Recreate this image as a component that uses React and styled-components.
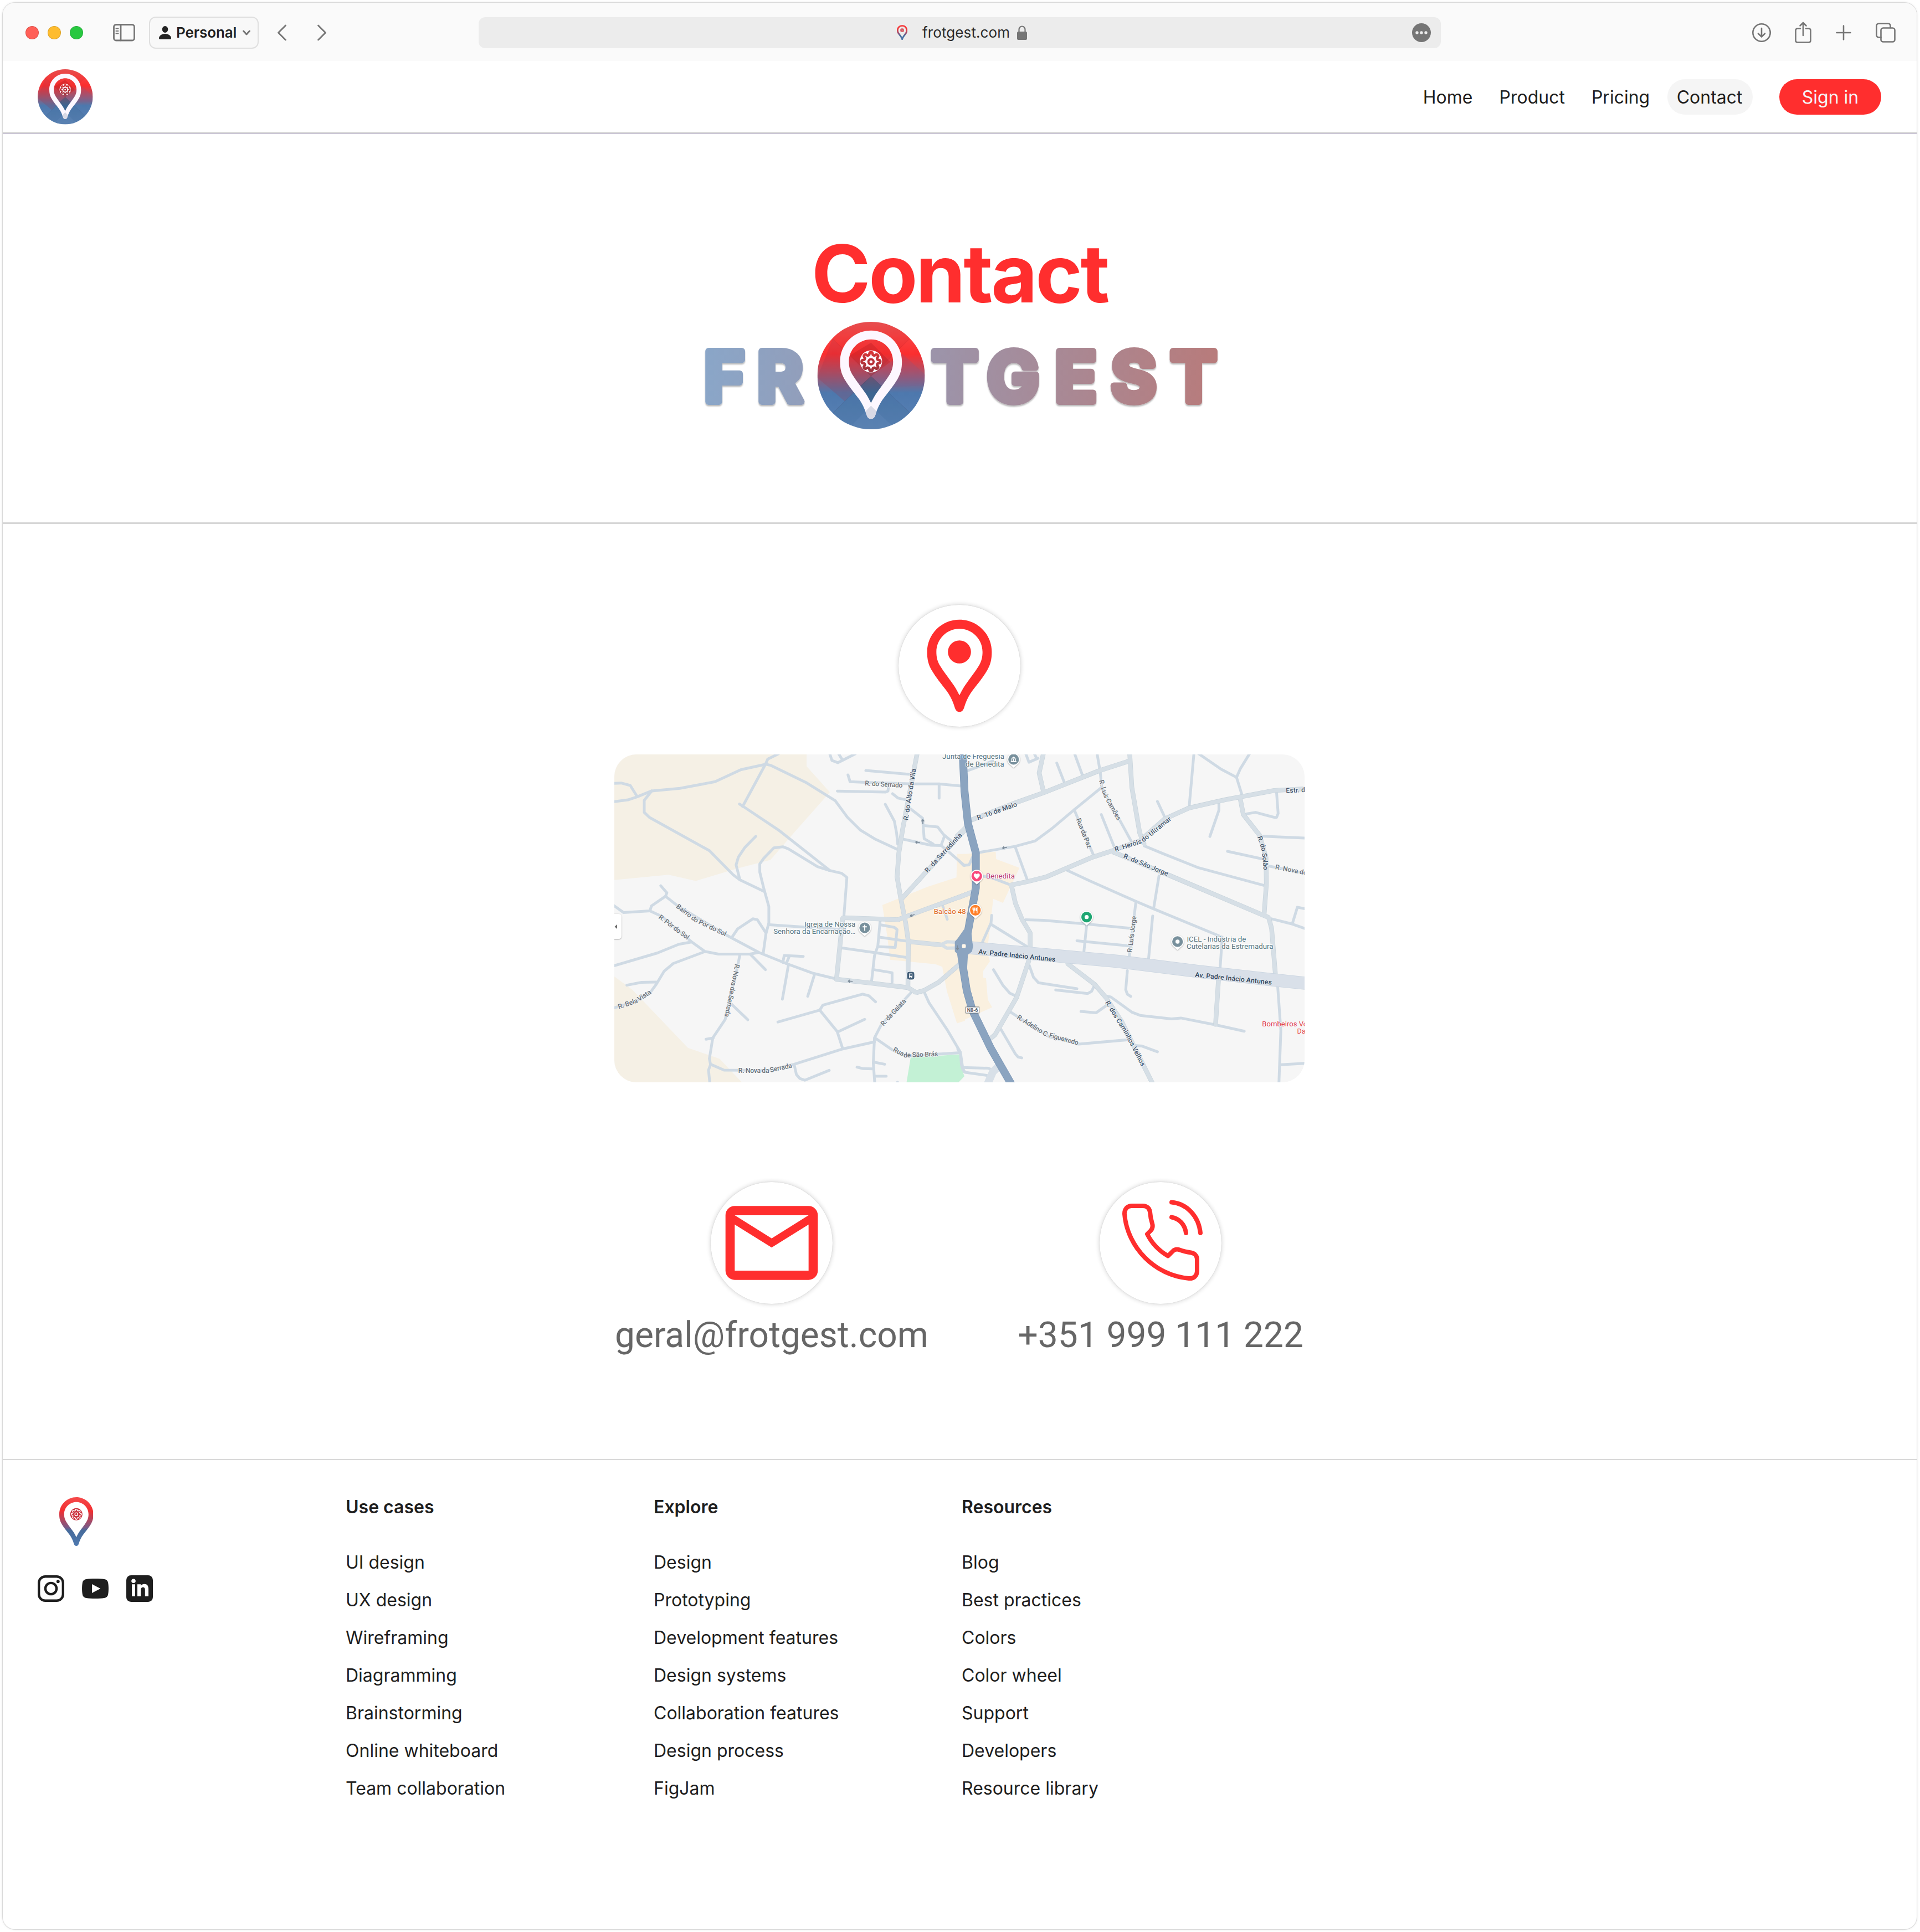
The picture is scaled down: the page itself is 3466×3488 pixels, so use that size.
import React from "react";
import styled, { createGlobalStyle } from "styled-components";

const Global = createGlobalStyle`
  * { box-sizing: border-box; }
  body { margin: 0; background: #fff; font-family: Inter, "Liberation Sans", sans-serif; color: #1e1e1e; }
  svg { display: block; flex: none; }
`;

/* ---------- window ---------- */
const Window = styled.div`
  margin: 5px;
  width: 3455px;
  height: 3478px;
  display: flex;
  flex-direction: column;
  background: #fff;
  border-radius: 22px;
  overflow: hidden;
  box-shadow: 0 0 1px 1px rgba(0, 0, 0, 0.12), 0 0 5px rgba(0, 0, 0, 0.1);
`;

const TitleBar = styled.div`
  height: 105px;
  flex: none;
  padding: 2px 38px 0 41px;
  display: grid;
  grid-template-columns: 818px 1737px 1fr;
  align-items: center;
  background: #fafafa;
`;
const BarGroup = styled.div`
  display: flex;
  align-items: center;
`;
const BarActions = styled(BarGroup)`
  justify-content: flex-end;
`;
const Light = styled.span`
  width: 24px;
  height: 24px;
  margin-right: 16px;
  border-radius: 50%;
  background: ${(p) => p.$color};
  border: 1px solid rgba(0, 0, 0, 0.14);
`;
const Profile = styled.div`
  display: flex;
  align-items: center;
  width: 198px;
  height: 58px;
  margin: 0 33px 0 25px;
  padding-left: 16px;
  border: 2px solid #dfdfdf;
  border-radius: 12px;
  background: #f8f8f8;
  font-size: 26px;
  font-weight: 600;
  color: #222;
`;
const ProfileName = styled.span`
  margin: 0 10px 0 9px;
  letter-spacing: -0.1px;
`;
const AddressBar = styled.div`
  height: 56px;
  display: grid;
  grid-template-columns: 1fr auto 1fr;
  align-items: center;
  padding: 0 18px;
  border-radius: 12px;
  background: #ececec;
  font-size: 26px;
  color: #2a2a2a;
`;
const Address = styled.div`
  grid-column: 2;
  display: flex;
  align-items: center;
  margin-left: 9px;
`;
const Host = styled.span`
  margin: 0 12px 0 27px;
  letter-spacing: 0.1px;
`;
const More = styled.div`
  justify-self: end;
`;

/* ---------- site header ---------- */
const Header = styled.header`
  height: 130px;
  flex: none;
  padding: 2px 64px 0 63px;
  display: flex;
  align-items: center;
  justify-content: space-between;
  border-bottom: 2px solid #d9d9d9;
`;
const Nav = styled.nav`
  display: flex;
  align-items: center;
  gap: 16px;
`;
const NavLink = styled.a`
  padding: ${(p) => (p.$active ? "17px 18.5px 15px 16.5px" : "17px 16px 15px")};
  border-radius: 32px;
  font-size: 32px;
  line-height: 32px;
  background: ${(p) => (p.$active ? "#f5f5f5" : "transparent")};
`;
const SignIn = styled.button`
  width: 184px;
  height: 64px;
  margin-left: 32px;
  padding: 1px 0 0;
  border: 0;
  border-radius: 32px;
  background: #ff2e2e;
  color: #f5f5f5;
  font: 400 32px/32px Inter, sans-serif;
`;

/* ---------- hero ---------- */
const Hero = styled.section`
  height: 706px;
  flex: none;
  padding-top: 165px;
  display: flex;
  flex-direction: column;
  align-items: center;
  border-top: 2px solid #cbc7d5;
  border-bottom: 3px solid #d6d6d6;
`;
const Title = styled.h1`
  margin: 0;
  font-size: 144px;
  line-height: 174px;
  font-weight: 700;
  letter-spacing: -0.024em;
  color: #ff2e2e;
`;

/* ---------- contact ---------- */
const ContactSection = styled.section`
  height: 1688px;
  flex: none;
  padding: 146px 2px 0 0;
  display: flex;
  flex-direction: column;
  align-items: center;
`;
const IconDisc = styled.div`
  width: 220px;
  height: 220px;
  display: flex;
  align-items: center;
  justify-content: center;
  border-radius: 50%;
  background: #fff;
  box-shadow: 0 0 1px rgba(0, 0, 0, 0.2), 0 0 8px rgba(0, 0, 0, 0.2);
`;
const MapCard = styled.div`
  width: 1246px;
  height: 592px;
  margin: 50px 0 180px;
  border-radius: 40px;
  overflow: hidden;
`;
const Channels = styled.div`
  width: 1243px;
  display: flex;
  justify-content: space-between;
`;
const Channel = styled.div`
  display: flex;
  flex-direction: column;
  align-items: center;
  gap: 18px;
  font: 400 64px/78px Roboto, sans-serif;
  color: #666;
`;

/* ---------- footer ---------- */
const Footer = styled.footer`
  flex: 1;
  padding: 63px 63px 64px;
  display: flex;
  border-top: 2px solid #d9d9d9;
`;
const Brand = styled.div`
  width: 556px;
  padding: 4px 0 0;
`;
const BrandMark = styled.div`
  padding-left: 38.5px;
`;
const Socials = styled.div`
  margin-top: 53px;
  display: flex;
  align-items: center;
  gap: 32px;
`;
const LinkColumn = styled.div`
  width: 556px;
  font-size: 32px;
  line-height: 44px;
`;
const ColumnTitle = styled.h2`
  margin: 0 0 56px;
  font-size: 32px;
  line-height: 44px;
  font-weight: 600;
`;
const LinkList = styled.ul`
  margin: 0;
  padding: 0;
  list-style: none;
  display: flex;
  flex-direction: column;
  gap: 24px;
`;

/* ---------- logo parts ---------- */
const PIN =
  "M12 2C8.13 2 5 5.13 5 9C5 10.6 5.25 11.7 6 13C6.9 14.55 8.1 15.95 9.2 17.4C9.95 18.4 10.6 19.7 11 21.1C11.2 21.7 11.5 22 12 22C12.5 22 12.8 21.7 13 21.1C13.4 19.7 14.05 18.4 14.8 17.4C15.9 15.95 17.1 14.55 18 13C18.75 11.7 19 10.6 19 9C19 5.13 15.87 2 12 2Z" +
  "M12 4C14.76 4 17 6.24 17 9C17 10.1 16.8 11 16.2 12C15.3 13.5 14.1 14.9 13.1 16.4C12.7 17 12.35 17.7 12 18.4C11.65 17.7 11.3 17 10.9 16.4C9.9 14.9 8.7 13.5 7.8 12C7.2 11 7 10.1 7 9C7 6.24 9.24 4 12 4Z";

const gearPath = (cx, cy, base, amp) => {
  const pts = [];
  for (let i = 0; i < 128; i++) {
    const a = (i / 128) * Math.PI * 2;
    const r = base + amp * Math.tanh(2 * Math.cos(8 * a));
    pts.push(`${(cx + r * Math.sin(a)).toFixed(3)} ${(cy - r * Math.cos(a)).toFixed(3)}`);
  }
  return `M${pts.join("L")}Z`;
};

const EmblemArt = ({ id }) => (
  <>
    <defs>
      <linearGradient id={`${id}-g`} x1="0" y1="33" x2="0" y2="614" gradientUnits="userSpaceOnUse">
        <stop offset="0" stopColor="#ee5252" />
        <stop offset="0.14" stopColor="#f94040" />
        <stop offset="0.3" stopColor="#fb2e2f" />
        <stop offset="0.48" stopColor="#a9536b" />
        <stop offset="0.66" stopColor="#4d78ad" />
        <stop offset="1" stopColor="#5a82b5" />
      </linearGradient>
      <linearGradient id={`${id}-r`} x1="0" y1="187" x2="0" y2="307" gradientUnits="userSpaceOnUse">
        <stop offset="0" stopColor="#dd3435" />
        <stop offset="1" stopColor="#98303b" />
      </linearGradient>
      <clipPath id={`${id}-c`}>
        <circle cx="336.5" cy="323.5" r="290.5" />
      </clipPath>
      <clipPath id={`${id}-t`}>
        <path d="M336 487L420 571H252Z" />
      </clipPath>
    </defs>
    <g clipPath={`url(#${id}-c)`}>
      <rect x="46" y="33" width="581" height="581" fill={`url(#${id}-g)`} />
      <path d="M336 -80L545 125L336 327L128 125Z" fill="#7c1520" opacity="0.06" />
      <path d="M336 146L440 250L336 327L222 215Z" fill="#8a1018" opacity="0.2" />
      <path d="M46 335L128 125L336 327L193 462Z" fill="#a03048" opacity="0.22" />
      <path d="M336 327L505 205L640 330V375L400 390Z" fill="#7a5a90" opacity="0.2" />
      <path d="M336 327L430 415L336 500L240 415Z" fill="#15304a" opacity="0.28" />
      <path d="M193 462L336 327L545 523L450 614H220L132 523Z" fill="#3d6790" opacity="0.2" />
      <path d="M336 487L470 614H210Z" fill="#6d8fc0" opacity="0.25" />
      <path d="M128 125L336 327L545 125M132 523L336 327L545 523" fill="none" stroke="#401020" strokeWidth="2" opacity="0.14" />
    </g>
    <g fillRule="evenodd">
      <path d={PIN} transform="translate(49.2 32.2) scale(23.9)" fill="#fdf7ff" />
      <g clipPath={`url(#${id}-t)`}>
        <path d={PIN} transform="translate(49.2 32.2) scale(23.9)" fill="#dadae6" />
      </g>
    </g>
    <circle cx="336" cy="247" r="60" fill="#fdf7ff" />
    <path d={gearPath(336, 248, 43.5, 7)} fill="none" stroke={`url(#${id}-r)`} strokeWidth="14" strokeLinejoin="round" />
    <circle cx="336" cy="249" r="14" fill="none" stroke="#b93038" strokeWidth="12" />
  </>
);

const Emblem = ({ size, id }) => (
  <svg width={size} height={size} viewBox="46 33 581 581">
    <EmblemArt id={id} />
  </svg>
);

const GradientPin = ({ height, id }) => (
  <svg width={height * 0.7} height={height} viewBox="5 2 14 20">
    <defs>
      <linearGradient id={id} x1="0" y1="2" x2="0" y2="22" gradientUnits="userSpaceOnUse">
        <stop offset="0" stopColor="#f54a4b" />
        <stop offset="0.28" stopColor="#f22f31" />
        <stop offset="0.62" stopColor="#7a5a86" />
        <stop offset="0.68" stopColor="#466b9b" />
        <stop offset="1" stopColor="#4f7ab0" />
      </linearGradient>
    </defs>
    <path d={PIN} fill={`url(#${id})`} fillRule="evenodd" />
    <circle cx="12" cy="9" r="2.5" fill="#cc3540" />
    <path d={gearPath(12, 9, 1.8, 0.3)} fill="none" stroke="#fff" strokeWidth="0.32" />
    <circle cx="12" cy="9" r="0.6" fill="none" stroke="#fff" strokeWidth="0.32" />
  </svg>
);

const Wordmark = () => (
  <svg width="946" height="194" viewBox="0 0 946 194" overflow="visible">
    <defs>
      <linearGradient id="word" x1="12" y1="0" x2="938" y2="0" gradientUnits="userSpaceOnUse">
        <stop offset="0" stopColor="#8aa6c8" />
        <stop offset="0.47" stopColor="#9d93a8" />
        <stop offset="1" stopColor="#b87b7b" />
      </linearGradient>
      <filter id="wordShadow" x="-5%" y="-20%" width="110%" height="150%">
        <feDropShadow dx="0" dy="2.5" stdDeviation="1.2" floodColor="#000" floodOpacity="0.28" />
      </filter>
    </defs>
    <g
      filter="url(#wordShadow)"
      fill="url(#word)"
      stroke="url(#word)"
      strokeWidth="12"
      strokeLinejoin="round"
      strokeLinecap="round"
      fontFamily="Inter, sans-serif"
      fontWeight="700"
      fontSize="125"
    >
      <text y="143.5" x="11 107">FR</text>
      <text y="143.5" x="422 522 644 745.5 853">TGEST</text>
    </g>
    <svg x="215.5" y="0" width="194" height="194" viewBox="46 33 581 581">
      <EmblemArt id="hero" />
    </svg>
  </svg>
);

/* ---------- icons ---------- */
const Line = styled.svg`
  fill: none;
  stroke: #757575;
  stroke-width: ${(p) => p.$w || 2.6};
  stroke-linecap: round;
  stroke-linejoin: round;
  margin-left: ${(p) => p.$ml || 0}px;
`;

const MailIcon = () => (
  <svg width="200" height="200" viewBox="0 0 24 24" fill="#ff2e2e">
    <path d="M22 6c0-1.1-.9-2-2-2H4c-1.1 0-2 .9-2 2v12c0 1.1.9 2 2 2h16c1.1 0 2-.9 2-2V6zm-2 0l-8 5-8-5h16zm0 12H4V8l8 5 8-5v10z" />
  </svg>
);
const PlaceIcon = () => (
  <svg width="200" height="200" viewBox="0 0 24 24" fill="#ff2e2e">
    <path d={PIN} fillRule="evenodd" />
    <circle cx="12" cy="9" r="2.5" />
  </svg>
);
const PhoneIcon = () => (
  <svg width="220" height="220" viewBox="0 0 220 220" fill="none" stroke="#ff2e2e" strokeWidth="8" strokeLinecap="round" strokeLinejoin="round">
    <path d="M58 43H78C85 43 90 47 91 54C91.6 62 93 69 95 75C96.5 80 95.500 84 92.500 87.500L86 94C94 110 107 124 123.500 133.500L132 125C135.500 121.500 140 120.800 144.500 122.500C151 125 158 126.500 165 127.500C172 128.800 176 133.500 176 140V160C176 169 170 175 161 174C100 169 50 118 45 58C44.500 49 50 43 58 43Z" />
    <path d="M130 36.500C158 39 179 62 182 92M130 63.500C144 66 154 77 156 92" />
  </svg>
);

const InstagramIcon = () => (
  <svg width="48" height="48" viewBox="0 0 48 48" fill="none" stroke="#1e1e1e" strokeWidth="4.400">
    <rect x="2.200" y="2.200" width="43.600" height="43.600" rx="11.500" />
    <circle cx="24" cy="24" r="10.100" />
    <circle cx="36.800" cy="11.200" r="2.900" fill="#1e1e1e" stroke="none" />
  </svg>
);
const YouTubeIcon = () => (
  <svg width="48" height="48" viewBox="0 0 48 48">
    <path fill="#1e1e1e" d="M8 7C15 5.700 33 5.700 40 7C44.500 7.700 46.600 10 47.200 14C48.200 20 48.200 28 47.200 34C46.600 38 44.500 40.300 40 41C33 42.300 15 42.300 8 41C3.500 40.300 1.400 38 .8 34C-.2 28-.2 20 .8 14C1.400 10 3.500 7.700 8 7Z" />
    <path fill="#fff" d="M18 16L33.300 24L18 32Z" />
  </svg>
);
const LinkedInIcon = () => (
  <svg width="48" height="48" viewBox="0 0 48 48">
    <rect width="48" height="48" rx="8.500" fill="#1e1e1e" />
    <g fill="#fff">
      <circle cx="13" cy="10.200" r="3.800" />
      <path d="M10 16.300H16V38H10ZM20 16.300H26V19.200C27.200 17.100 29.500 15.700 32.600 15.700C38.600 15.700 40 19.600 40 25.600V38H33.800V26.800C33.800 23.800 33 21.700 30.200 21.700C27.300 21.700 26.200 23.800 26.200 26.800V38H20Z" />
    </g>
  </svg>
);

/* ---------- street map ---------- */
/* The streets come as two tiles, W and E, each in its own tile units. */
const TILE_X = { W: -8, E: 622 };
const toPoints = (tile, list) =>
  list.split(" ").map((p) => {
    const [x, y] = p.split(",").map(Number);
    return [TILE_X[tile] + x / 2.45, y / 2.529 - 12];
  });
const toPath = (tile, list) =>
  "M" + toPoints(tile, list).map(([x, y]) => `${x.toFixed(1)} ${y.toFixed(1)}`).join("L");

const AREAS = [
  ["W", "#f5f0e5", "0,0 870,0 870,85 973,203 800,405 710,512 560,552 380,608 260,580 0,606"],
  ["W", "#f5f0e5", "0,1030 100,1105 345,1370 485,1420 595,1540 0,1540"],
  ["W", "#faf0df", "1570,485 1535,485 1533,592 1405,635 1205,718 1225,850 1240,968 1440,988 1470,1000 1490,1110 1535,1258 1570,1247"],
  ["E", "#faf0df", "0,487 163,475 165,508 268,548 195,708 152,690 140,800 125,930 137,975 107,1020 108,1050 120,1052 128,1150 147,1185 0,1253"],
  ["W", "#c3f1d5", "1330,1415 1548,1400 1556,1470 1568,1500 1530,1540 1310,1540"],
  ["E", "#c3f1d5", "-5,1400 5,1412 18,1480 22,1500 -10,1524"],
];

const MINOR = {
  W: [
    "10,163 50,161 90,172 120,222", "10,247 80,238 120,224 185,197 310,185 465,155 580,100 690,75 710,80 870,160 997,242 1050,317 1107,375 1175,418 1278,467",
    "745,28 698,52 688,75 587,268", "573,257 590,268 745,375 970,558", "185,197 152,240 152,295 175,318 440,470 545,580 575,603 680,655",
    "645,405 597,455 568,500 558,535 575,603", "970,560 918,543 790,462 765,452 725,457 680,505 663,530 663,568 680,640 703,725 703,800 690,850 678,940",
    "970,560 1025,573 1048,592 1035,770", "225,630 252,662 246,678 184,722 177,745 60,752 10,715", "246,678 300,722 520,858 660,935 780,985 900,1030 1000,1055",
    "177,745 230,770 360,885 420,930 480,942 620,942 655,935", "360,887 305,897 210,937 10,998", "417,932 280,985 240,1020 205,1080 180,1115 110,1160 10,1190",
    "205,1070 140,1071 75,1084", "705,808 850,818 1028,830", "540,865 565,827 632,781 652,785 690,845", "620,942 688,1013", "575,945 560,1020 530,1140 510,1240 455,1325 440,1420 445,1445 505,1472 700,1473 815,1445 1030,1375 1170,1343",
    "425,1331 457,1325", "445,1447 436,1472 443,1540", "535,1168 610,1242", "765,980 771,948 855,953", "780,985 793,953", "790,990 763,1148", "905,1035 875,1135",
    "743,1252 928,1198 1005,1295 1030,1375", "928,1198 942,1175 1117,1125 1145,1132 1175,1160", "1008,1297 1127,1240", "815,1447 825,1492 840,1510 862,1518 970,1473",
    "1330,1120 1200,1265 1170,1325 1165,1440 1172,1540", "1172,1325 1250,1380 1310,1408 1550,1392", "1170,1436 1215,1445", "1093,1458 1120,1465 1165,1466", "1175,1500 1222,1500",
    "1390,1115 1412,1165 1490,1285 1550,1390 1555,1450 1568,1480", "1272,1527 1272,1540",
    "970,20 982,58 1008,68 1085,28", "1012,28 1028,55", "1132,104 1340,123", "1053,124 1062,155 1130,158 1340,165 1455,165 1560,175", "1456,165 1456,230",
    "1006,198 1220,202 1230,198 1232,175", "1250,210 1275,230 1320,240", "1218,258 1258,335 1268,390 1273,440", "1325,275 1383,322 1390,415 1430,440", "1390,355 1450,362 1480,402 1465,445",
    "1480,400 1510,425", "1300,418 1420,445 1465,446 1510,485 1568,538", "1195,808 1258,820 1270,830 1262,912 1185,908", "1193,865 1320,884", "1195,790 1185,905 1170,950 1157,1070",
    "1025,914 1170,935 1315,958", "1168,1013 1248,1027 1248,1070", "1472,722 1492,783",
  ],
  E: [
    "30,108 95,83 150,60", "295,25 310,66 350,48", "335,30 345,50", "512,28 548,130", "433,70 467,160", "610,20 625,110 632,180 765,432", "630,182 510,283 410,370 338,425 250,450 90,478",
    "510,283 595,490", "630,305 690,460", "878,245 912,320", "1040,20 1018,275", "1050,20 1160,98 1228,135 1252,215", "1290,20 1245,95 1228,135", "1150,250 1150,285 1110,405",
    "1405,205 1412,300 1405,318 1395,318 1312,295 1272,302", "1330,403 1540,413", "1188,473 1340,507", "1370,540 1540,575", "820,448 900,482 1060,548 1355,630",
    "250,455 303,605", "100,585 150,595 230,627", "480,560 580,608 780,700 860,735 1165,865 1155,1010", "885,585 862,730", "783,703 752,965", "857,768 838,975",
    "295,785 375,788 565,805 765,825", "565,810 552,940", "522,881 755,905", "145,765 142,800 105,885", "145,808 300,907", "1378,780 1475,805 1535,827", "1475,803 1497,728 1540,737",
    "153,1013 195,1085 225,1120 255,1135", "310,990 330,1048 352,1073 522,1100", "428,1106 570,1122 587,1112 597,1090", "745,1018 738,1105 745,1125 760,1135",
    "540,1204 607,1210 655,1175", "645,1132 672,1138 765,1207 802,1222 940,1238 982,1234 1135,1265 1262,1294", "230,1208 300,1255 400,1320 530,1353 750,1333", "785,1360 810,1362 878,1388",
    "187,1287 250,1398 262,1412 278,1416", "1410,1090 1424,1290 1415,1540", "1424,1447 1540,1440", "15,1460 130,1463 145,1470", "-5,1375 8,1400 18,1470 28,1482 130,1497", "0,515 20,537 45,535 60,500",
  ],
};

const MEDIUM = {
  W: [
    "1360,20 1295,370 1278,480 1270,590 1285,680 1308,800 1320,885 1318,1095 1355,1118", "1575,370 1405,560 1290,690", "1300,775 1390,740 1470,710 1580,668",
    "1030,776 1275,785 1303,772", "1030,776 1002,1057 1160,1075 1318,1095", "1355,1118 1390,1108 1455,1070 1545,990", "1320,885 1465,900",
  ],
  E: [
    "375,20 355,115 375,205", "55,330 240,255 375,205 620,105 755,60", "755,20 765,180 800,390 820,440", "-10,405 40,355", "-5,685 60,658",
    "230,627 300,612 385,590 590,500 680,470 800,425 910,325 1018,275 1180,237 1395,195 1540,187", "680,475 920,578 1370,775", "1243,225 1258,305 1330,400 1358,500 1360,620 1350,760",
    "1370,775 1383,825 1400,1035", "232,627 250,710 280,785 315,845 315,915", "310,970 255,1140 160,1310 140,1328", "480,985 600,1080 650,1140 720,1250 860,1540", "1148,1060 1135,1265",
  ],
};
const SPLIT = ["1465,899 1490,886 1530,888", "1465,899 1490,915 1530,914"];
const MAIN = [
  "16,0 25,200 40,345 75,480 75,640 40,840 18,905 18,1000 35,1110 60,1200 140,1370 237,1545",
];

const LABELS = [
  ["W", 0, "R. do Serrado", "1127,172 1295,182"],
  ["W", 1, "R. do Alto da Vila", "1318,332 1354,96"],
  ["W", 1, "R. da Serradinha", "1405,572 1560,400"],
  ["W", 0, "Bairro do Pôr do Sol", "291,728 375,795 510,862"],
  ["W", 0, "R. Pôr do Sol", "213,778 343,878"],
  ["W", 0, "R. Bela Vista", "40,1193 120,1165 186,1120"],
  ["W", 0, "R. Nova da Serrada", "554,986 530,1115 507,1228"],
  ["W", 0, "R. Nova da Serrada", "568,1484 700,1484 808,1460"],
  ["W", 0, "R. da Gaiata", "1210,1272 1313,1157"],
  ["W", 0, "Rua de São Brás", "1250,1385 1305,1414 1452,1408"],
  ["E", 1, "R. 16 de Maio", "84,330 260,266"],
  ["E", 0, "R. Luís Camões", "620,150 640,222 702,335"],
  ["E", 0, "Rua da Paz", "518,327 570,462"],
  ["E", 1, "R. Heróis do Ultramar", "692,475 812,436 942,328"],
  ["E", 1, "R. de São Jorge", "726,502 922,586"],
  ["E", 1, "R. do Solão", "1320,408 1340,470 1348,560"],
  ["E", 0, "R. Nova do", "1398,554 1540,582"],
  ["E", 1, "Estr. d", "1447,206 1533,202"],
  ["E", 0, "R. Luís Jorge", "765,936 785,768"],
  ["E", 2, "Av. Padre Inácio Antunes", "86,941 427,977"],
  ["E", 2, "Av. Padre Inácio Antunes", "1044,1046 1384,1082"],
  ["E", 0, "R. Adelino C. Figueiredo", "255,1236 380,1316 527,1358"],
  ["E", 1, "R. dos Caminhos Velhos", "646,1163 735,1310 808,1457"],
];
const LABEL_COLORS = ["#6a737b", "#44566c", "#30445a"];

const ARROWS = [
  ["W", 1362, 432, 190], ["W", 1338, 765, 160], ["W", 1064, 1066, 184], ["W", 1384, 338, -90], ["E", 203, 456, 170], ["W", 1537, 912, 85],
];

const POIS = [
  ["W", 1086, 818, "end", "#56757f", "Igreja de Nossa", 92],
  ["W", 1086, 850, "end", "#56757f", "Senhora da Encarnação…", 148],
  ["E", 201, 51, "end", "#56757f", "Junta de Freguesia", 112],
  ["E", 200, 86, "end", "#56757f", "de Benedita", 69.5],
  ["E", 120, 597, "start", "#b83c77", "Benedita", 52],
  ["E", 31, 758, "end", "#e0661a", "Balcão 48", 58],
  ["E", 1008, 885, "start", "#56757f", "ICEL - Indústria de", 107],
  ["E", 1007, 918, "start", "#56757f", "Cutelarias da Estremadura", 156.500],
  ["E", 1341, 1271, "start", "#dc3a48", "Bombeiros Vo", 82],
  ["E", 1496, 1305, "start", "#dc3a48", "Da", 15],
];

const pathLength = (pts) =>
  pts.slice(1).reduce((sum, [x, y], i) => sum + Math.hypot(x - pts[i][0], y - pts[i][1]), 0);

const Marker = ({ tile, x, y, color, children }) => {
  const [[px, py]] = toPoints(tile, `${x},${y}`);
  return (
    <g transform={`translate(${px} ${py})`}>
      <path d="M0 15L-6 9.500A11.300 11.300 0 1 1 6 9.500Z" fill="#fff" filter="url(#poiShadow)" />
      <circle r="9.600" fill={color} />
      {children}
    </g>
  );
};

const StreetMap = () => (
  <svg width="1246" height="592" viewBox="0 0 1246 592">
    <defs>
      <filter id="poiShadow" x="-30%" y="-30%" width="160%" height="170%">
        <feDropShadow dx="0" dy="0.800" stdDeviation="0.900" floodColor="#000" floodOpacity="0.4" />
      </filter>
      {LABELS.map(([tile, , , pts], i) => (
        <path key={i} id={`street${i}`} d={toPath(tile, pts)} />
      ))}
    </defs>
    <rect width="1246" height="592" fill="#f6f6f6" />
    {AREAS.map(([tile, fill, pts], i) => (
      <path key={i} d={toPath(tile, pts) + "Z"} fill={fill} />
    ))}
    <g fill="none" strokeLinecap="round" strokeLinejoin="round">
      <g stroke="#cfdae4" strokeWidth="5">
        {["W", "E"].flatMap((t) => MINOR[t].map((p, i) => <path key={t + i} d={toPath(t, p)} />))}
      </g>
      <g stroke="#c6d2da" strokeWidth="8.400" strokeLinecap="butt">
        {["W", "E"].flatMap((t) => MEDIUM[t].map((p, i) => <path key={t + i} d={toPath(t, p)} />))}
      </g>
      <g stroke="#d6dfe6" strokeWidth="7.200">
        {["W", "E"].flatMap((t) => MEDIUM[t].map((p, i) => <path key={t + i} d={toPath(t, p)} />))}
        {SPLIT.map((p, i) => <path key={i} d={toPath("W", p)} strokeWidth="6" />)}
      </g>
      <path d={toPath("E", "125,1540 150,1480 175,1455")} stroke="#d8e0e8" strokeWidth="14" strokeLinecap="butt" />
      <path d={toPath("E", "40,912 330,940 700,975 1050,1020 1400,1061 1560,1078")} stroke="#c8d3df" strokeWidth="23.500" />
      <path d={toPath("E", "40,912 330,940 700,975 1050,1020 1400,1061 1560,1078")} stroke="#d9e0e9" strokeWidth="22" />
      {MAIN.map((p, i) => (
        <g key={i} strokeLinecap="butt">
          <path d={toPath("E", p)} stroke="#7593b4" strokeWidth="14" />
          <path d={toPath("E", p)} stroke="#8ba4c0" strokeWidth="12.800" />
        </g>
      ))}
    </g>
    <path d={toPath("E", "22,830 55,838 60,890 63,905 58,930 40,945 36,1010 2,1010 -8,940 -18,930 -18,885 -5,870") + "Z"} fill="#8ba4c0" />
    <rect x="627.500" y="342.500" width="7" height="7" rx="2.500" fill="#fff7ea" />

    {ARROWS.map(([tile, x, y, angle], i) => {
      const [[px, py]] = toPoints(tile, `${x},${y}`);
      return <path key={i} d="M-4 0H4M1 -2.500L4 0L1 2.500" transform={`translate(${px} ${py}) rotate(${angle})`} stroke="#7c8b99" strokeWidth="1.600" fill="none" />;
    })}

    <g fontFamily="Roboto, sans-serif" fontSize="12.200" fontWeight="500" stroke="#f8f9fa" strokeWidth="2" strokeLinejoin="round" paintOrder="stroke">
      {LABELS.map(([tile, tone, name, pts], i) => (
        <text key={i} fill={LABEL_COLORS[tone]} strokeOpacity={tone === 2 ? 0.3 : 0.8}>
          <textPath href={`#street${i}`} textLength={(pathLength(toPoints(tile, pts)) - 0.500).toFixed(1)}>
            {name}
          </textPath>
        </text>
      ))}
    </g>

    <Marker tile="W" x={1127} y={822} color="#78909c">
      <path d="M0 -5.500V5.500M-3.800 -1.800H3.800" stroke="#fff" strokeWidth="1.800" />
    </Marker>
    <Marker tile="E" x={242} y={53} color="#78909c">
      <path d="M-5 -1.500L0 -5L5 -1.500ZM-5 3H5V4.800H-5ZM-4 -1H-2.500V3H-4ZM-.8 -1H.8V3H-.8ZM2.500 -1H4V3H2.500Z" fill="#fff" />
    </Marker>
    <Marker tile="E" x={79} y={586} color="#f9487b">
      <path d="M0 5.500C-3 2.800 -5.500 .8 -5.500 -1.700C-5.500 -3.500 -4.200 -4.700 -2.700 -4.700C-1.500 -4.700 -.6 -4.100 0 -3.200C.6 -4.100 1.500 -4.700 2.700 -4.700C4.200 -4.700 5.500 -3.500 5.500 -1.700C5.500 .8 3 2.800 0 5.500Z" fill="#fff" />
    </Marker>
    <Marker tile="E" x={73} y={742} color="#ff7f27">
      <path d="M-4.500 -5V-2Q-4.500 0 -2.700 0Q-.9 0 -.9 -2V-5M-2.700 -5V5.500M3 5.500V-4.500Q1.200 -3.500 1.200 .5H3" fill="none" stroke="#fff" strokeWidth="1.500" />
    </Marker>
    <Marker tile="E" x={565} y={773} color="#1ea672"><circle r="3.700" fill="#fff" /></Marker>
    <Marker tile="E" x={967} y={885} color="#78909c"><circle r="3.700" fill="#fff" /></Marker>

    <g fontFamily="Roboto, sans-serif" fontSize="13" stroke="#fff" strokeWidth="2" strokeOpacity="0.8" strokeLinejoin="round" paintOrder="stroke">
      {POIS.map(([tile, x, y, anchor, fill, name, width], i) => {
        const [[px, py]] = toPoints(tile, `${x},${y}`);
        return (
          <text key={i} x={px} y={py} fill={fill} textAnchor={anchor} textLength={width} lengthAdjust="spacingAndGlyphs">
            {name}
          </text>
        );
      })}
    </g>

    <g transform="translate(535 399.500)">
      <rect x="-7" y="-7.500" width="14" height="15" rx="4" fill="#44607a" stroke="#fff" strokeWidth="1" />
      <path d="M-3 -4H3V2.800H-3ZM-2.600 2.800H-1.200V4.200H-2.600ZM1.200 2.800H2.600V4.200H1.200Z" fill="#fff" />
      <path d="M-2 -2.700H2V.2H-2Z" fill="#44607a" />
    </g>
    <g transform="translate(646.500 461.500)">
      <rect x="-12" y="-5.500" width="24" height="11" fill="#fff" stroke="#59636d" strokeWidth="1" />
      <text y="3.300" textAnchor="middle" fontFamily="Roboto, sans-serif" fontSize="9" fontWeight="500" fill="#46525e">N8-6</text>
    </g>
    <path d="M-5 288H7Q13 288 13 294V327Q13 333 7 333H-5Z" fill="#fff" filter="url(#poiShadow)" />
    <path d="M5 307V315L.5 311Z" fill="#6b6b6b" />
  </svg>
);

/* ---------- data ---------- */
const NAV = ["Home", "Product", "Pricing", "Contact"];
const COLUMNS = [
  ["Use cases", ["UI design", "UX design", "Wireframing", "Diagramming", "Brainstorming", "Online whiteboard", "Team collaboration"]],
  ["Explore", ["Design", "Prototyping", "Development features", "Design systems", "Collaboration features", "Design process", "FigJam"]],
  ["Resources", ["Blog", "Best practices", "Colors", "Color wheel", "Support", "Developers", "Resource library"]],
];

export default function App() {
  return (
    <>
      <Global />
      <Window>
        <TitleBar>
          <BarGroup>
            <Light $color="#ff5f57" />
            <Light $color="#febc2e" />
            <Light $color="#28c840" />
            <Line $ml={38} $w={2.8} width="40" height="32" viewBox="0 0 40 32">
              <rect x="1.500" y="1.500" width="37" height="28.500" rx="4" />
              <path d="M14 2V30" />
              <path d="M5.500 8.500H9.500M5.500 13H9.500M5.500 17.500H9.500" strokeWidth="2" />
            </Line>
            <Profile>
              <svg width="22" height="24" viewBox="0 0 22 24" fill="#222">
                <ellipse cx="11" cy="6" rx="5.300" ry="6" />
                <path d="M2 24C.6 24 0 23.300 0 22C0 18 4.500 14 11 14S22 18 22 22C22 23.300 21.400 24 20 24Z" />
              </svg>
              <ProfileName>Personal</ProfileName>
              <Line width="16" height="12" viewBox="0 0 16 12" $w={3}>
                <path d="M2.500 3L8 9L13.500 3" />
              </Line>
            </Profile>
            <Line width="18" height="32" viewBox="0 0 18 32" $w={2.8}>
              <path d="M15.500 3L2.500 16L15.500 29" />
            </Line>
            <Line $ml={54} width="18" height="32" viewBox="0 0 18 32" $w={2.8}>
              <path d="M2.500 3L15.500 16L2.500 29" />
            </Line>
          </BarGroup>
          <AddressBar>
            <Address>
              <GradientPin height={27.5} id="fav" />
              <Host>frotgest.com</Host>
              <svg width="20" height="26" viewBox="0 0 20 26">
                <path d="M4.500 12V7.500A5.500 6 0 0 1 15.500 7.500V12" fill="none" stroke="#757575" strokeWidth="2.200" />
                <rect x="1" y="11" width="18" height="15" rx="2.500" fill="#757575" />
              </svg>
            </Address>
            <More>
              <svg width="34" height="34" viewBox="0 0 34 34">
                <circle cx="17" cy="17" r="17" fill="#757575" />
                <g fill="#ececec">
                  <circle cx="9" cy="17" r="2.700" />
                  <circle cx="17" cy="17" r="2.700" />
                  <circle cx="25" cy="17" r="2.700" />
                </g>
              </svg>
            </More>
          </AddressBar>
          <BarActions>
            <Line width="34" height="34" viewBox="0 0 34 34">
              <circle cx="17" cy="17" r="15.700" />
              <path d="M17 9V24M11 18.500L17 24.500L23 18.500" />
            </Line>
            <Line $ml={43} width="30" height="40" viewBox="0 0 30 40">
              <path d="M10 12.500H5Q1.500 12.500 1.500 16V34Q1.500 37.500 5 37.500H25Q28.500 37.500 28.500 34V16Q28.500 12.500 25 12.500H20M15 25V2.500M9.500 7.500L15 2L20.500 7.500" />
            </Line>
            <Line $ml={44} width="28" height="28" viewBox="0 0 28 28">
              <path d="M14 1.500V26.500M1.500 14H26.500" />
            </Line>
            <Line $ml={44} width="36" height="36" viewBox="0 0 36 36">
              <rect x="9.500" y="9.500" width="25" height="25" rx="4" />
              <path d="M9.500 26.500H6Q1.500 26.500 1.500 22V6Q1.500 1.500 6 1.500H22Q26.500 1.500 26.500 6V9" />
            </Line>
          </BarActions>
        </TitleBar>

        <Header>
          <Emblem size={99.5} id="head" />
          <Nav>
            {NAV.map((n) => (
              <NavLink key={n} $active={n === "Contact"}>{n}</NavLink>
            ))}
            <SignIn>Sign in</SignIn>
          </Nav>
        </Header>

        <Hero>
          <Title>Contact</Title>
          <Wordmark />
        </Hero>

        <ContactSection>
          <IconDisc><PlaceIcon /></IconDisc>
          <MapCard><StreetMap /></MapCard>
          <Channels>
            <Channel>
              <IconDisc><MailIcon /></IconDisc>
              geral@frotgest.com
            </Channel>
            <Channel>
              <IconDisc><PhoneIcon /></IconDisc>
              +351 999 111 222
            </Channel>
          </Channels>
        </ContactSection>

        <Footer>
          <Brand>
            <BrandMark><GradientPin height={88} id="foot" /></BrandMark>
            <Socials>
              <InstagramIcon />
              <YouTubeIcon />
              <LinkedInIcon />
            </Socials>
          </Brand>
          {COLUMNS.map(([title, links]) => (
            <LinkColumn key={title}>
              <ColumnTitle>{title}</ColumnTitle>
              <LinkList>
                {links.map((l) => <li key={l}>{l}</li>)}
              </LinkList>
            </LinkColumn>
          ))}
        </Footer>
      </Window>
    </>
  );
}
